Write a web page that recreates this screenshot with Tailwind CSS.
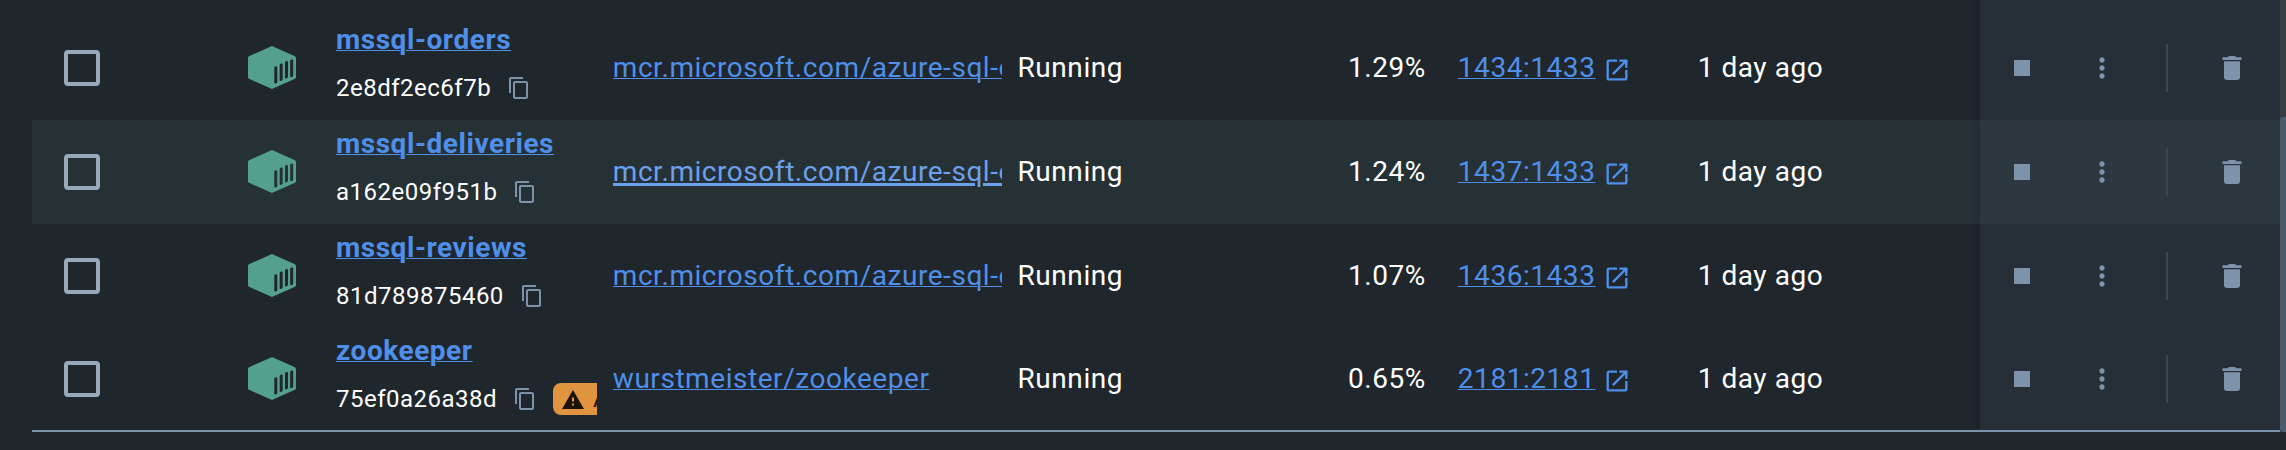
<!DOCTYPE html>
<html lang="en">
<head>
<meta charset="utf-8">
<title>Containers</title>
<script src="https://cdn.jsdelivr.net/npm/@tailwindcss/browser@4"></script>
</head>
<body class="bg-[#1f262c]">
<svg class="hidden">
  <symbol id="cube" viewBox="0 0 48 43"><path fill-rule="evenodd" d="M24 0 L47 10.2 Q48 10.7 48 11.8 V31.2 Q48 32.3 47 32.8 L24 43 L1 32.8 Q0 32.3 0 31.2 V11.8 Q0 10.7 1 10.2 Z M26.3 21.5 Q26.3 20.5 27.8 20.3 Q29.3 20.2 29.3 21.2 V36 Q29.3 37 27.8 37.5 Q26.3 37.8 26.3 36.8 Z M31.7 18.8 Q31.7 17.8 33.2 17.6 Q34.7 17.4 34.7 18.4 V33.4 Q34.7 34.4 33.2 34.8 Q31.7 35.2 31.7 34.2 Z M37 16.4 Q37 15.4 38.5 15 Q40 14.7 40 15.7 V30.8 Q40 31.8 38.5 32.3 Q37 32.8 37 31.8 Z M42.2 14.9 Q42.2 13.9 43.7 13.5 Q45.2 13.3 45.2 14.3 V29.6 Q45.2 30.6 43.7 31.1 Q42.2 31.4 42.2 30.4 Z"/></symbol>
  <symbol id="copy" viewBox="0 0 24 24"><path d="M16 1H4c-1.1 0-2 .9-2 2v14h2V3h12V1zm3 4H8c-1.1 0-2 .9-2 2v14c0 1.1.9 2 2 2h11c1.1 0 2-.9 2-2V7c0-1.1-.9-2-2-2zm0 16H8V7h11v14z"/></symbol>
  <symbol id="open" viewBox="0 0 24 24"><path d="M19 19H5V5h7V3H5c-1.11 0-2 .9-2 2v14c0 1.1.89 2 2 2h14c1.1 0 2-.9 2-2v-7h-2v7zM14 3v2h3.59l-9.83 9.83 1.41 1.41L19 6.41V10h2V3h-7z"/></symbol>
  <symbol id="dots" viewBox="0 0 24 24"><path d="M12 8c1.1 0 2-.9 2-2s-.9-2-2-2-2 .9-2 2 .9 2 2 2zm0 2c-1.1 0-2 .9-2 2s.9 2 2 2 2-.9 2-2-.9-2-2-2zm0 6c-1.1 0-2 .9-2 2s.9 2 2 2 2-.9 2-2-.9-2-2-2z"/></symbol>
  <symbol id="trash" viewBox="0 0 20 24"><path d="M2 5.3H18V21.6Q18 24 15.6 24H4.4Q2 24 2 21.6Z M.5 1.3H5.6Q6.3 0 7.6 0H12.4Q13.7 0 14.4 1.3H19.5V4H.5Z"/></symbol>
  <symbol id="warn" viewBox="0 0 22 19"><path fill-rule="evenodd" d="M11 0L22 19H0ZM10 7.6V11.6H12V7.6ZM10 13.6V15.6H12V13.6Z"/></symbol>
</svg>
<main class="flex h-[450px] w-[2286px] overflow-hidden bg-[#1f262c] font-['Roboto',sans-serif] text-[28px] leading-[40px] tracking-[0.55px] text-white">
  <div id="rows" class="ml-8 h-[432px] w-[2248px] border-b-2 border-[#7794ab]">
    <div class="flex h-4 justify-end"><div class="w-[300px] bg-[#262f37] shadow-[-2px_0_8px_rgba(0,0,0,0.2)] [clip-path:inset(0_0_0_-12px)]"></div></div>
  </div>
  <div class="h-[432px] w-1.5 bg-[#353c42] pt-[117px]"><div class="h-[315px] rounded-l-[3px] bg-[#4a5b6c]"></div></div>
</main>
<template id="row">
  <div class="flex h-[104px] items-center">
    <div class="ml-8 size-9 rounded-[4px] border-4 border-[#97a9bb]"></div>
    <svg class="mb-px ml-[148px] h-[43px] w-12 fill-[#53a08f]"><use href="#cube"/></svg>
    <div class="ml-10 h-full w-[261px] overflow-hidden">
      <a data-f="name" class="mt-1 block h-10 w-fit font-bold text-[#4f8fea] underline decoration-1 underline-offset-1"></a>
      <div class="mt-2 flex h-10 items-center">
        <span data-f="id" class="text-2xl leading-10 tracking-[0.5px]"></span>
        <svg class="ml-4 size-6 shrink-0 fill-[#7c93ab]"><use href="#copy"/></svg>
        <div data-f="badge" class="hidden ml-4 h-8 shrink-0 items-center gap-[9px] rounded-[8px] bg-[#e09440] px-[9px] text-2xl leading-8 text-[#1c1206]"><svg class="h-[19px] w-[22px] fill-[#1c1206]"><use href="#warn"/></svg>AMD64</div>
      </div>
    </div>
    <div class="ml-4 w-[389px] overflow-hidden whitespace-nowrap"><a data-f="image" class="text-[#4f8fea] underline decoration-1 underline-offset-1"></a></div>
    <div class="ml-4 w-[200px]">Running</div>
    <div data-f="cpu" class="w-[208.5px] text-right"></div>
    <div class="ml-8 flex w-[240px] items-center"><a data-f="port" class="text-[#4f8fea] underline decoration-1 underline-offset-1"></a><svg class="ml-[7.5px] mt-1 size-7 fill-[#4f8fea]"><use href="#open"/></svg></div>
    <div class="w-[282.5px]">1 day ago</div>
    <div data-f="actions" class="flex h-full w-[300px] shrink-0 items-center bg-[#262f37] shadow-[-2px_0_8px_rgba(0,0,0,0.2)] [clip-path:inset(0_0_0_-12px)]">
      <div class="ml-[34px] size-4 bg-[#7c93ab]"></div>
      <svg class="ml-[56px] size-8 fill-[#7c93ab]"><use href="#dots"/></svg>
      <div class="ml-[48px] h-12 w-0.5 bg-[#3d464f]"></div>
      <svg class="ml-[54px] h-6 w-5 fill-[#7c93ab]"><use href="#trash"/></svg>
    </div>
  </div>
</template>
<script>
const data = [
  {name: 'mssql-orders', id: '2e8df2ec6f7b', image: 'mcr.microsoft.com/azure-sql-edge', cpu: '1.29%', port: '1434:1433'},
  {name: 'mssql-deliveries', id: 'a162e09f951b', image: 'mcr.microsoft.com/azure-sql-edge', cpu: '1.24%', port: '1437:1433', hover: true},
  {name: 'mssql-reviews', id: '81d789875460', image: 'mcr.microsoft.com/azure-sql-edge', cpu: '1.07%', port: '1436:1433'},
  {name: 'zookeeper', id: '75ef0a26a38d', image: 'wurstmeister/zookeeper', cpu: '0.65%', port: '2181:2181', last: true},
];
const rows = document.getElementById('rows');
for (const d of data) {
  const row = document.getElementById('row').content.firstElementChild.cloneNode(true);
  const f = k => row.querySelector(`[data-f=${k}]`);
  for (const k of ['name', 'id', 'image', 'cpu', 'port']) f(k).textContent = d[k];
  if (d.hover) {
    row.classList.add('bg-[#263136]');
    f('actions').classList.replace('bg-[#262f37]', 'bg-[#2d373f]');
    f('image').classList.replace('text-[#4f8fea]', 'text-[#6ca0ec]');
    f('image').classList.replace('decoration-1', 'decoration-[3px]');
    f('image').classList.replace('underline-offset-1', 'underline-offset-2');
  }
  if (d.last) {
    row.classList.replace('h-[104px]', 'h-[102px]');
    f('name').classList.replace('mt-1', 'mt-[3px]');
    f('badge').classList.replace('hidden', 'flex');
  }
  rows.append(row);
}
</script>
</body>
</html>
